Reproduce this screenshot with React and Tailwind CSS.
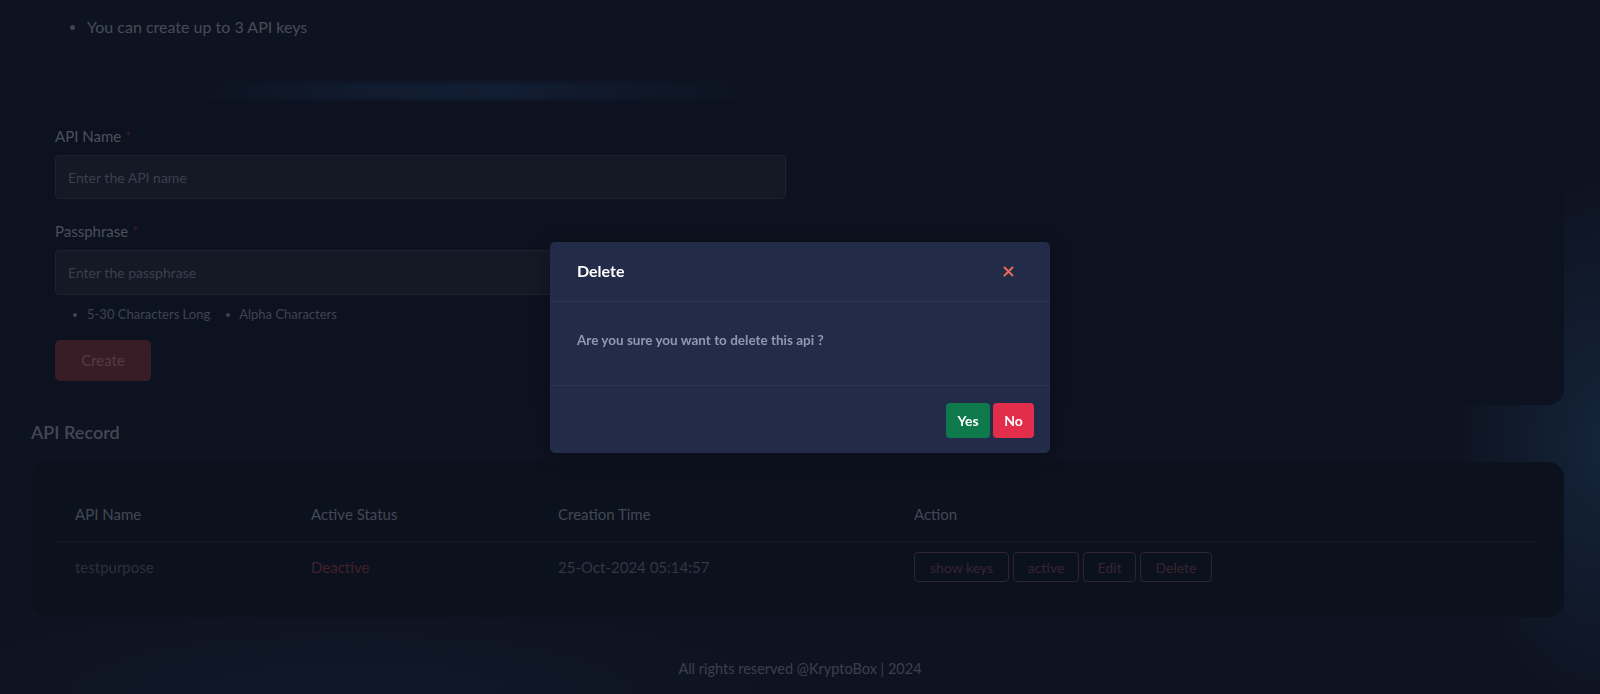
import React from "react";

function Dot({ className = "" }) {
  return <span className={"inline-block rounded-full bg-[#3f4452] " + className} />;
}

export default function App() {
  return (
    <div className="relative min-h-[694px] w-full overflow-hidden bg-[#0e1321] bg-[radial-gradient(ellipse_140px_260px_at_100%_64%,#14243a_0%,transparent_100%),radial-gradient(ellipse_420px_90px_at_22%_100%,#101828_0%,transparent_100%)] font-['Lato',_'Liberation_Sans',_sans-serif]">
      {/* top bullet */}
      <div className="pt-[15px] flex items-center h-[39px] box-border">
        <Dot className="ml-[70px] w-[5px] h-[5px]" />
        <span className="ml-[12px] text-[16px] leading-[24px] text-[#474c59]">You can create up to 3 API keys</span>
      </div>

      {/* glow bar */}
      <div className="mt-[43px] ml-[205px] w-[540px] h-[18px] bg-[linear-gradient(90deg,transparent,#111c30_30%,#121e33_55%,transparent)] blur-[2px]" />

      {/* form card */}
      <div className="mx-[31px] w-[1533px] rounded-b-[16px] bg-[#0d1220] px-[24px] pt-[25px] pb-[24px]">
        <div className="text-[15px] leading-[22px] text-[#4b505c]">
          API Name <span className="text-[#3a1e29]">*</span>
        </div>
        <div className="mt-[8px] w-[731px] h-[44px] rounded-[4px] border border-[#1d2230] bg-[#141926] flex items-center px-[12px] text-[14px] text-[#3b404d]">
          Enter the API name
        </div>
        <div className="mt-[21px] text-[15px] leading-[22px] text-[#4b505c]">
          Passphrase <span className="text-[#3a1e29]">*</span>
        </div>
        <div className="mt-[8px] w-[731px] h-[45px] rounded-[4px] border border-[#1d2230] bg-[#141926] flex items-center px-[12px] text-[14px] text-[#3b404d]">
          Enter the passphrase
        </div>
        <div className="mt-[10px] flex items-center h-[20px] text-[13px] text-[#3f4452]">
          <Dot className="ml-[18px] w-[4px] h-[4px]" />
          <span className="ml-[10px]">5-30 Characters Long</span>
          <Dot className="ml-[16px] w-[4px] h-[4px]" />
          <span className="ml-[9px]">Alpha Characters</span>
        </div>
        <div className="mt-[15px] w-[96px] h-[41px] rounded-[5px] bg-[#381c26] flex items-center justify-center text-[15px] text-[#573b44]">
          Create
        </div>
      </div>

      {/* API Record */}
      <div className="mt-[13px] ml-[31px] text-[18px] leading-[28px] font-semibold text-[#434855]">API Record</div>

      <div className="mt-[16px] mx-[31px] w-[1533px] rounded-[16px] bg-[#0c111e] px-[25px] py-[25px]">
        <div className="grid grid-cols-[236px_247px_356px_1fr] h-[55px] items-center border-b border-[#151a27] text-[15px] text-[#434855]">
          <div className="pl-[19px]">API Name</div>
          <div className="pl-[19px]">Active Status</div>
          <div className="pl-[19px]">Creation Time</div>
          <div className="pl-[19px]">Action</div>
        </div>
        <div className="grid grid-cols-[236px_247px_356px_1fr] h-[50px] items-center text-[15px]">
          <div className="pl-[19px] text-[#2b303c]">testpurpose</div>
          <div className="pl-[19px] text-[#41212c]">Deactive</div>
          <div className="pl-[19px] text-[#323744]">25-Oct-2024 05:14:57</div>
          <div className="pl-[19px] flex gap-[4px] text-[14px] text-[#38252e]">
            <div className="h-[30px] w-[95px] rounded-[4px] border border-[#30242d] flex items-center justify-center">show keys</div>
            <div className="h-[30px] w-[66px] rounded-[4px] border border-[#30242d] flex items-center justify-center">active</div>
            <div className="h-[30px] w-[53px] rounded-[4px] border border-[#30242d] flex items-center justify-center">Edit</div>
            <div className="h-[30px] w-[72px] rounded-[4px] border border-[#30242d] flex items-center justify-center">Delete</div>
          </div>
        </div>
      </div>

      {/* footer */}
      <div className="mt-[42px] text-center text-[14.5px] leading-[20px] text-[#3b404d]">
        All rights reserved @KryptoBox | 2024
      </div>

      {/* modal */}
      <div className="fixed inset-0 flex items-center justify-center">
        <div className="w-[500px] rounded-[5px] bg-[#222c48] shadow-[0_4px_20px_rgba(0,0,0,0.35)]">
          <div className="h-[60px] flex items-center justify-between pl-[27px] pr-[36px] border-b border-[#2d3755]">
            <span className="text-[16px] font-bold text-white">Delete</span>
            <svg width="11" height="11" viewBox="0 0 11 11" className="mt-[1px]">
              <path d="M1.5 1.5 L9.5 9.5 M9.5 1.5 L1.5 9.5" stroke="#e86b55" strokeWidth="2" strokeLinecap="round" />
            </svg>
          </div>
          <div className="h-[84px] flex items-center pl-[27px] pb-[6px] text-[13.5px] font-bold text-[#8f99b0] border-b border-[#2d3755]">
            Are you sure you want to delete this api ?
          </div>
          <div className="h-[67px] flex justify-end items-start pt-[17px] pr-[16px] gap-[3px]">
            <div className="h-[35px] w-[44px] rounded-[4px] bg-[#0e7a4c] flex items-center justify-center text-[14px] font-bold text-white">Yes</div>
            <div className="h-[35px] w-[41px] rounded-[4px] bg-[#e22d4b] flex items-center justify-center text-[14px] font-bold text-white">No</div>
          </div>
        </div>
      </div>
    </div>
  );
}
